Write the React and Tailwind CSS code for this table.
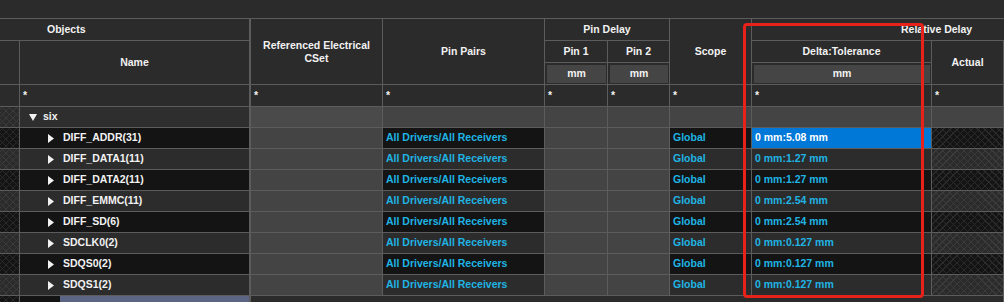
import React from "react";

const line = "border-[#5c5c5c]";
const cell = `border-r border-b ${line}`;
const head =
  "flex items-center justify-center text-center leading-[13px] text-[#f2f2f2]";

const hatchLight =
  "bg-[#2b2b2b] bg-[image:repeating-linear-gradient(45deg,#3b3b3b_0_1px,transparent_1px_5px),repeating-linear-gradient(-45deg,#3b3b3b_0_1px,transparent_1px_5px)]";
const hatchDark =
  "bg-[#141414] bg-[image:repeating-linear-gradient(45deg,#2a2a2a_0_1px,transparent_1px_5px),repeating-linear-gradient(-45deg,#2a2a2a_0_1px,transparent_1px_5px)]";

const nets = [
  { name: "DIFF_ADDR(31)", tol: "0 mm:5.08 mm", selected: true },
  { name: "DIFF_DATA1(11)", tol: "0 mm:1.27 mm" },
  { name: "DIFF_DATA2(11)", tol: "0 mm:1.27 mm" },
  { name: "DIFF_EMMC(11)", tol: "0 mm:2.54 mm" },
  { name: "DIFF_SD(6)", tol: "0 mm:2.54 mm" },
  { name: "SDCLK0(2)", tol: "0 mm:0.127 mm" },
  { name: "SDQS0(2)", tol: "0 mm:0.127 mm" },
  { name: "SDQS1(2)", tol: "0 mm:0.127 mm" },
];

const TriangleDown = () => (
  <svg width="8" height="7" viewBox="0 0 8 7" className="shrink-0">
    <polygon points="0,0 8,0 4,7" fill="#f2f2f2" />
  </svg>
);

const TriangleRight = () => (
  <svg width="6" height="9" viewBox="0 0 6 9" className="shrink-0">
    <polygon points="0,0 6,4.5 0,9" fill="#f2f2f2" />
  </svg>
);

const Filter = ({ className = "" }) => (
  <div className={`${cell} flex items-center pl-[3px] text-[#f2f2f2] ${className}`}>*</div>
);

const UnitBox = ({ className = "" }) => (
  <div className={`${cell} pt-[2px] pb-[1px] pl-[2px] pr-[1px] ${className}`}>
    <div className="h-full bg-[#454545] flex items-center justify-center text-[#f2f2f2]">
      mm
    </div>
  </div>
);

const NetRow = ({ net, index }) => {
  const dark = index % 2 === 0;
  const rowBg = dark ? "bg-[#141414]" : "bg-[#2c2c2c]";
  const cyan = "text-[#1fb4e4]";
  return (
    <>
      <div className={`${cell} ${dark ? hatchDark : hatchLight}`} />
      <div className={`border-b border-r-2 ${line} ${rowBg} flex items-center pl-[28px] gap-[9px] text-[#f2f2f2]`}>
        <TriangleRight />
        <span>{net.name}</span>
      </div>
      <div className={`${cell} bg-[#444444]`} />
      <div className={`${cell} ${rowBg} ${cyan} flex items-center pl-[3px]`}>
        All Drivers/All Receivers
      </div>
      <div className={`${cell} bg-[#444444]`} />
      <div className={`${cell} bg-[#444444]`} />
      <div className={`${cell} ${rowBg} ${cyan} flex items-center pl-[3px]`}>Global</div>
      <div
        className={`${cell} flex items-center pl-[3px] ${
          net.selected ? "bg-[#0078d7] text-white" : `${rowBg} ${cyan}`
        }`}
      >
        {net.tol}
      </div>
      <div className={`${cell} ${dark ? hatchDark : hatchLight}`} />
    </>
  );
};

export default function App() {
  return (
    <div className="relative w-[1004px] h-[302px] overflow-hidden bg-[#2b2b2b] font-['Liberation_Sans',Arial,sans-serif] text-[10.5px] font-bold">
      {/* toolbar strip above the grid */}
      <div className={`h-[19px] border-b ${line}`} />

      <div className="grid grid-cols-[20px_231px_132px_162px_63px_62px_82px_180px_72px] grid-rows-[22px_22px_22px_22px] auto-rows-[21px]">
        {/* header band 1 */}
        <div className={`col-span-2 border-b border-r-2 ${line} flex items-center pl-[47px] text-[#f2f2f2]`}>
          Objects
        </div>
        <div className={`${cell} ${head} row-span-3 col-start-3 row-start-1`}>
          Referenced Electrical
          <br />
          CSet
        </div>
        <div className={`${cell} ${head} row-span-3 col-start-4 row-start-1`}>Pin Pairs</div>
        <div className={`${cell} ${head} col-span-2 col-start-5 row-start-1`}>Pin Delay</div>
        <div className={`${cell} ${head} row-span-3 col-start-7 row-start-1`}>Scope</div>
        <div className={`border-b ${line} col-span-2 col-start-8 row-start-1 flex items-center pl-[149px] text-[#f2f2f2] whitespace-nowrap`}>
          Relative Delay
        </div>

        {/* header band 2 and 3 */}
        <div className={`${cell} row-span-2 col-start-1 row-start-2`} />
        <div className={`border-b border-r-2 ${line} ${head} row-span-2 col-start-2 row-start-2`}>Name</div>
        <div className={`${cell} ${head} col-start-5 row-start-2`}>Pin 1</div>
        <div className={`${cell} ${head} col-start-6 row-start-2`}>Pin 2</div>
        <div className={`${cell} ${head} col-start-8 row-start-2`}>Delta:Tolerance</div>
        <div className={`${cell} ${head} row-span-2 col-start-9 row-start-2`}>Actual</div>
        <UnitBox className="col-start-5 row-start-3" />
        <UnitBox className="col-start-6 row-start-3" />
        <UnitBox className="col-start-8 row-start-3" />

        {/* filter row */}
        <div className={`${cell} col-start-1 row-start-4`} />
        <Filter className="border-r-2" />
        <Filter />
        <Filter />
        <Filter />
        <Filter />
        <Filter />
        <Filter />
        <Filter />

        {/* group row */}
        <div className={`${cell} ${hatchLight}`} />
        <div className={`border-b border-r-2 ${line} bg-[#2e2e2e] flex items-center pl-[9px] gap-[6px] text-[#f2f2f2]`}>
          <TriangleDown />
          <span>six</span>
        </div>
        <div className={`${cell} bg-[#4a4a4a]`} />
        <div className={`${cell} bg-[#444444]`} />
        <div className={`${cell} bg-[#444444]`} />
        <div className={`${cell} bg-[#444444]`} />
        <div className={`${cell} bg-[#444444]`} />
        <div className={`${cell} bg-[#444444]`} />
        <div className={`${cell} bg-[#444444]`} />

        {nets.map((net, i) => (
          <NetRow key={net.name} net={net} index={i} />
        ))}

        {/* next row, partly scrolled in */}
        <div className={`${cell} ${hatchDark}`} />
        <div className={`border-r-2 ${line} flex`}>
          <div className="w-[40px] bg-[#141414]" />
          <div className="flex-1 bg-[#5c6583]" />
        </div>
        <div className={`${cell} col-span-7 bg-[#2b2b2b]`} />
      </div>

      {/* highlight frame drawn over the Delta:Tolerance column */}
      <div className="absolute left-[743px] top-[23px] w-[181px] h-[275px] border-[3px] border-[#e8211b] rounded-[4px] pointer-events-none" />
    </div>
  );
}
